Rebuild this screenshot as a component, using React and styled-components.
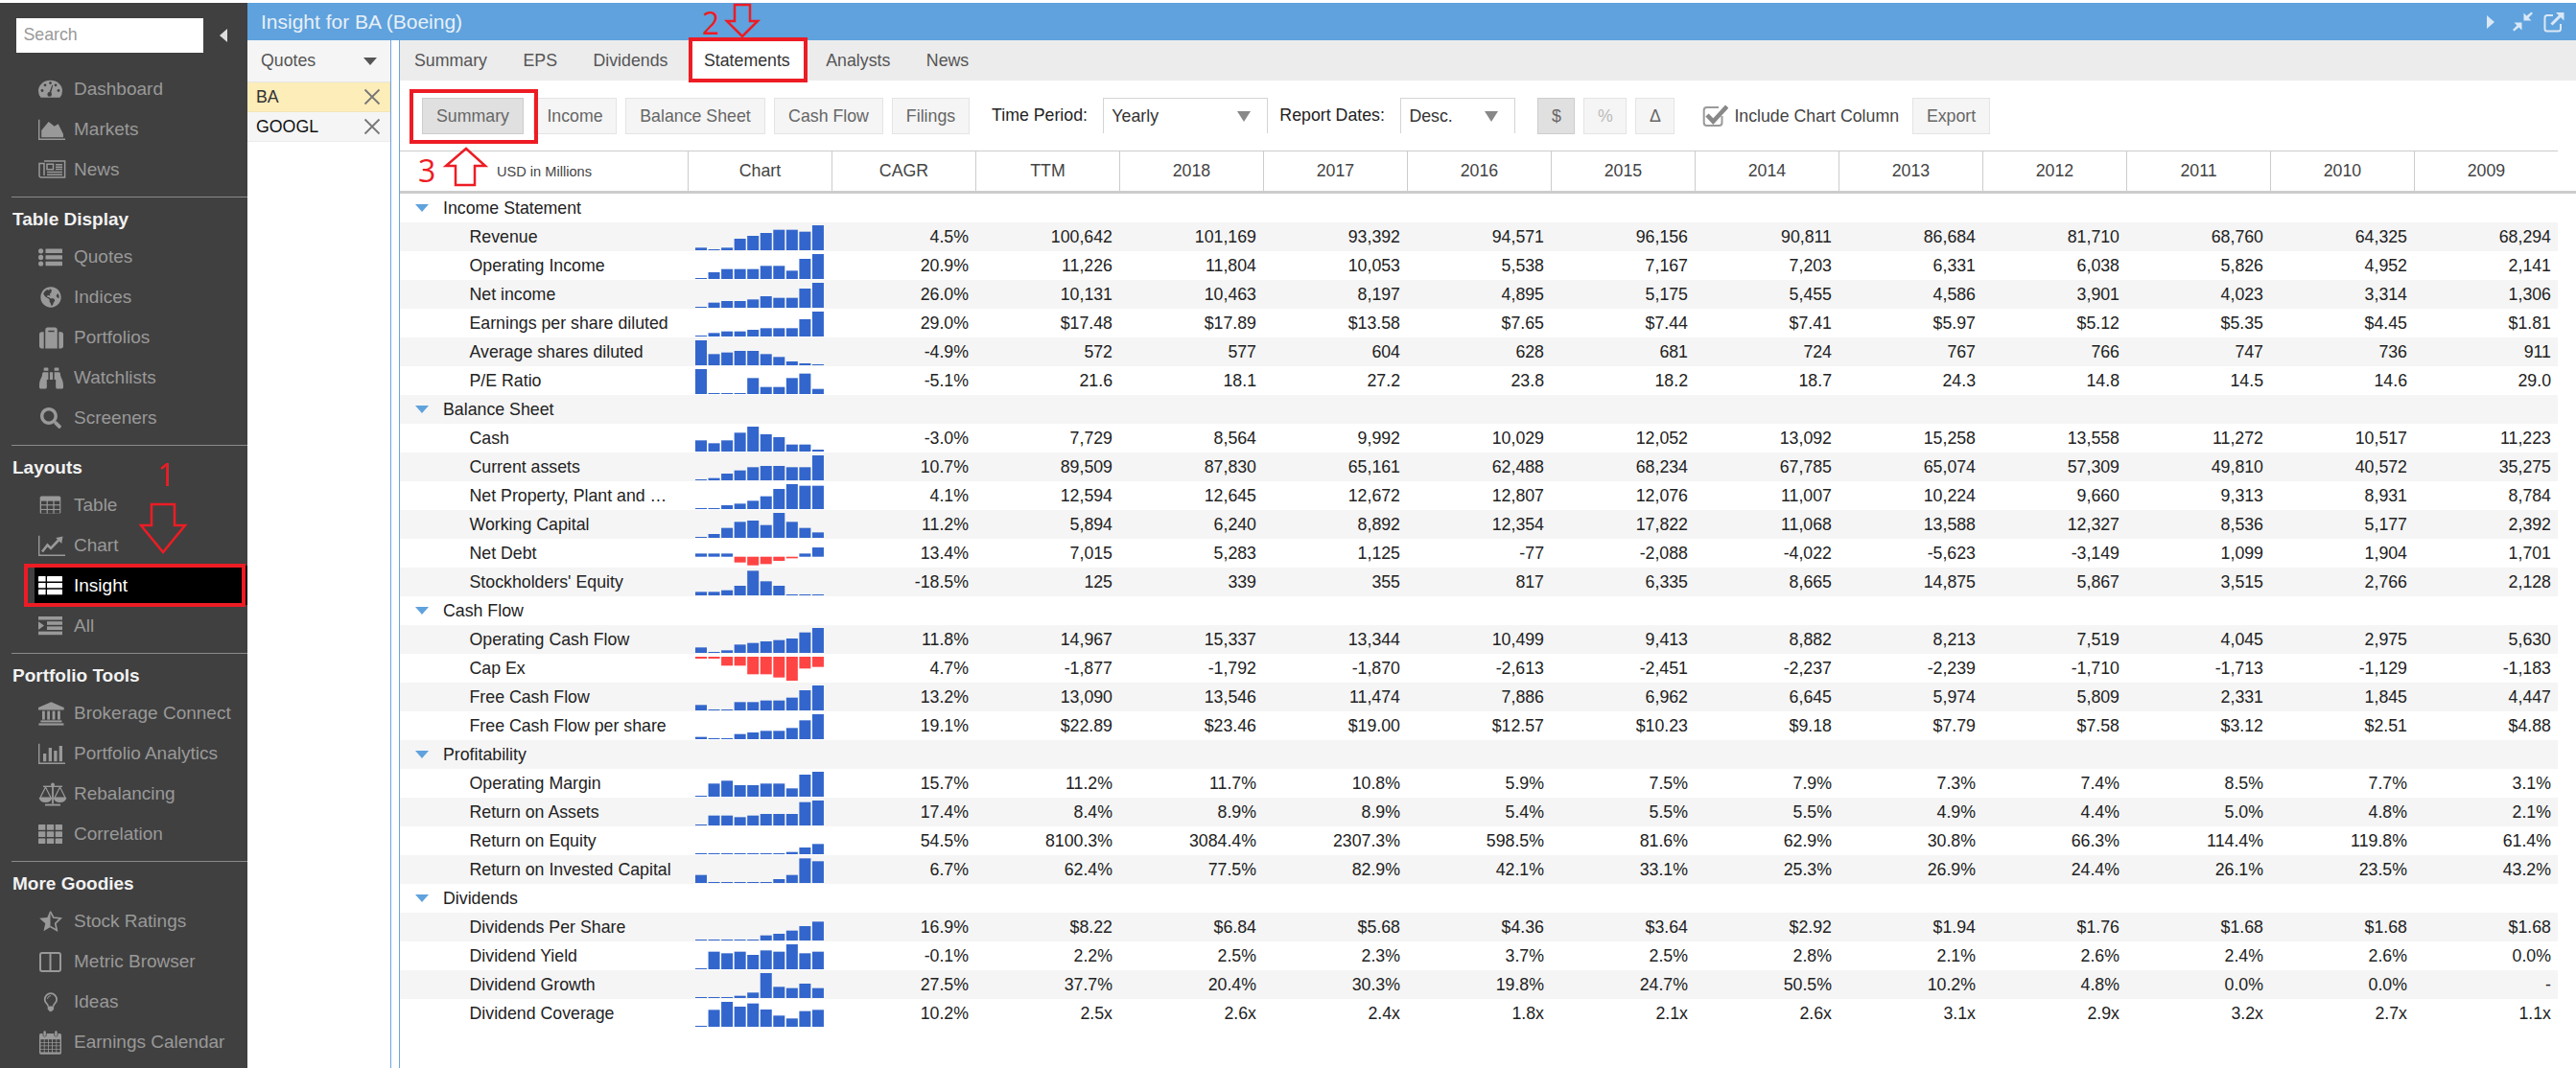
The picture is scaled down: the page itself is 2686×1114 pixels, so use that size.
import React from "react";
import styled, { createGlobalStyle } from "styled-components";
import { FaGlobeAmericas, FaSuitcase, FaBinoculars, FaSearch } from "react-icons/fa";

const Global = createGlobalStyle`
  html, body { margin: 0; padding: 0; background: #fff; overflow: hidden; }
  body { font-family: "Liberation Sans", Arial, sans-serif; font-size: 17.75px; color: #222; }
  * { box-sizing: border-box; }
`;

const Page = styled.div`
  position: relative;
  display: flex;
  width: 2686px;
  height: 1114px;
  padding-top: 3px;
  overflow: hidden;
`;

/* ---------- sidebar ---------- */
const Sidebar = styled.aside`
  flex: 0 0 258px;
  background: #404040;
  color: #999;
  font-size: 19px;
`;
const SearchRow = styled.div`
  display: flex;
  align-items: center;
  height: 69px;
  padding: 0 0 0 17px;
`;
const SearchInput = styled.input`
  width: 195px;
  height: 36px;
  margin-top: -2px;
  border: 0;
  padding: 0 7.5px;
  font: 17.75px "Liberation Sans", Arial, sans-serif;
  background: #fff;
  &::placeholder { color: #999; opacity: 1; }
`;
const CollapseArrow = styled.span`
  margin: -2px 0 0 17px;
  width: 0;
  height: 0;
  border-top: 7px solid transparent;
  border-bottom: 7px solid transparent;
  border-right: 8px solid #ddd;
`;
const NavSection = styled.section`
  margin-top: 7px;
  margin-left: 12px;
  border-top: 1px solid #8a8a8a;
`;
const NavHeading = styled.h3`
  margin: 0;
  height: 41px;
  line-height: 46px;
  margin-left: 1px;
  font-size: 19px;
  font-weight: 700;
  color: #f2f2f2;
`;
const NavItem = styled.div`
  display: flex;
  align-items: center;
  gap: 11px;
  height: ${(p) => (p.$active ? "41px" : "42px")};
  margin: ${(p) => (p.$active ? "0 0 1px" : "0")};
  margin-left: ${(p) => p.$inset}px;
  padding-left: 4px;
  background: ${(p) => (p.$active ? "#000" : "transparent")};
  color: ${(p) => (p.$active ? "#fff" : "#999")};
  white-space: nowrap;
`;
const NavIcon = styled.span`
  display: flex;
  align-items: center;
  justify-content: ${(p) => (p.$fa ? "center" : "flex-start")};
  flex: 0 0 26px;
  font-size: ${(p) => p.$fa ?? 24}px;
`;
const Glyph = styled.svg`
  flex: none;
  width: 30px;
  height: 26px;
  margin-right: -4px;
  fill: currentColor;
  stroke: none;
`;

/* ---------- main ---------- */
const Main = styled.main`
  flex: 1;
  display: flex;
  flex-direction: column;
  min-width: 0;
`;
const TitleBar = styled.header`
  display: flex;
  align-items: center;
  justify-content: space-between;
  height: 39px;
  padding: 0 12px 0 14px;
  background: #5fa2dd;
  color: #e8f0f8;
  font-size: 21px;
`;
const TitleTools = styled.div`
  display: flex;
  align-items: center;
  gap: 11px;
  color: #dbe8f5;
`;
const PlayArrow = styled.span`
  margin-right: 8px;
  width: 0;
  height: 0;
  border-top: 7px solid transparent;
  border-bottom: 7px solid transparent;
  border-left: 8px solid #dbe8f5;
`;
const Workspace = styled.div`
  flex: 1;
  display: flex;
  min-height: 0;
`;
const QuotesPanel = styled.div`
  flex: 0 0 150px;
  border-right: 1px solid #6ea5dc;
`;
const QuotesHead = styled.div`
  display: flex;
  align-items: center;
  justify-content: space-between;
  height: 44px;
  padding: 0 14px;
  background: #f5f5f5;
  color: #555;
  border-bottom: 1px solid #e6e6e6;
`;
const DownTriangle = styled.span`
  width: 0;
  height: 0;
  border-left: ${(p) => p.$w / 2}px solid transparent;
  border-right: ${(p) => p.$w / 2}px solid transparent;
  border-top: ${(p) => p.$h}px solid ${(p) => p.$c};
`;
const QuoteRow = styled.div`
  display: flex;
  align-items: center;
  justify-content: space-between;
  height: 31px;
  padding: 0 9px;
  background: ${(p) => (p.$selected ? "#fdedb9" : "#f5f5f5")};
  border: 1px solid ${(p) => (p.$selected ? "#f1e4b8" : "#ececec")};
  border-width: 0 1px 1px 0;
  color: ${(p) => (p.$selected ? "#333" : "#111")};
`;
const Gutter = styled.div`
  flex: 0 0 8px;
`;
const Content = styled.div`
  flex: 1;
  min-width: 0;
  border-left: 1px solid #6ea5dc;
`;
const Tabs = styled.nav`
  display: flex;
  gap: 7.5px;
  height: 42px;
  background: #ececec;
`;
const Tab = styled.div`
  display: flex;
  align-items: center;
  padding: 0 15px;
  background: ${(p) => (p.$active ? "#fff" : "transparent")};
  color: ${(p) => (p.$active ? "#333" : "#555")};
`;
const Toolbar = styled.div`
  display: flex;
  align-items: flex-start;
  height: 73px;
  padding: 18px 0 0 23px;
`;
const Btn = styled.button`
  flex: 0 0 ${(p) => p.$w}px;
  height: 38px;
  margin-left: ${(p) => p.$ml ?? 9}px;
  padding: 0;
  border: 1px solid ${(p) => (p.$on ? "#cdcdcd" : "#e4e4e4")};
  background: ${(p) => (p.$on ? "#e0e0e0" : "#f5f5f5")};
  color: ${(p) => p.$c ?? "#666"};
  font: 17.75px "Liberation Sans", Arial, sans-serif;
`;
const ToolLabel = styled.span`
  margin-left: ${(p) => p.$ml}px;
  line-height: 36px;
  color: #222;
  white-space: nowrap;
`;
const Select = styled.div`
  display: flex;
  align-items: center;
  justify-content: space-between;
  flex: 0 0 ${(p) => p.$w}px;
  height: 37px;
  margin-left: ${(p) => p.$ml}px;
  padding: 0 17px 0 8px;
  border: 1px solid #d4d4d4;
  border-bottom: 0;
  color: #333;
`;
const CheckLabel = styled.span`
  display: flex;
  align-items: center;
  gap: 6px;
  height: 38px;
  margin-left: 29px;
  color: #444;
  white-space: nowrap;
`;

/* ---------- table ---------- */
const HeadRow = styled.div`
  display: flex;
  height: 45px;
  border-bottom: 3px solid #ccc;
`;
const HeadTop = styled.div`
  display: flex;
  width: 2250px;
  height: 42px;
  border-top: 1px solid #ccc;
`;
const UnitCell = styled.div`
  flex: 0 0 300px;
  display: flex;
  align-items: center;
  padding-left: 101px;
  font-size: 14.6px;
  color: #444;
`;
const HeadCell = styled.div`
  flex: 0 0 150px;
  display: flex;
  align-items: center;
  justify-content: center;
  border-left: 1px solid #ccc;
  color: #444;
`;
const Row = styled.div`
  display: flex;
  width: 2250px;
  height: 30px;
  line-height: 30px;
  background: ${(p) => (p.$striped ? "#f5f5f5" : "#fff")};
  color: #222;
`;
const GroupLabel = styled.div`
  display: flex;
  align-items: center;
  gap: 15px;
  padding-left: 16px;
`;
const RowLabel = styled.div`
  flex: 0 0 300px;
  padding: 0 0 0 72.5px;
  white-space: nowrap;
`;
const ChartCell = styled.div`
  flex: 0 0 150px;
  display: flex;
  padding-left: 8px;
`;
const ValueCell = styled.div`
  flex: 0 0 150px;
  padding-right: 7px;
  text-align: right;
`;

/* ---------- annotations over the page ---------- */
const Overlay = styled.svg`
  position: absolute;
  left: 0;
  top: 0;
  width: 2686px;
  height: 1114px;
  pointer-events: none;
`;
const RedBox = styled.div`
  position: absolute;
  left: ${(p) => p.$x}px;
  top: ${(p) => p.$y}px;
  width: ${(p) => p.$w}px;
  height: ${(p) => p.$h}px;
  border: 4.5px solid #ed1c24;
  pointer-events: none;
`;
const RedMark = styled.span`
  position: absolute;
  left: ${(p) => p.$x}px;
  top: ${(p) => p.$y}px;
  font: 32px/32px "Open Sans", sans-serif;
  color: #ed1c24;
`;

/* ---------- sidebar glyphs, local box: x0 = 40px, 26px high, centred on the row ---------- */
const DARK = "#404040";
const Axis = () => <path d="M0 2.8 H1.4 V22.6 H28 V24 H0 Z" />;

const IconGauge = () => (
  <Glyph viewBox="0 0 30 26">
    <path d="M2.6 21.8 Q0 18.8 0 14.8 A12.5 11 0 0 1 25 14.8 Q25 18.8 22.4 21.8 Z" />
    <g fill={DARK}>
      <circle cx="4" cy="14.5" r="1.4" /><circle cx="7" cy="8.8" r="1.4" /><circle cx="12.5" cy="6.6" r="1.4" />
      <circle cx="18" cy="8.8" r="1.4" /><circle cx="21" cy="14.5" r="1.4" /><circle cx="11.7" cy="18.4" r="2.3" />
      <path d="M10.9 18 L14.3 8.8 L15.2 9.1 L12.7 18.7 Z" />
    </g>
  </Glyph>
);
const IconArea = () => (
  <Glyph viewBox="0 0 30 26">
    <Axis />
    <path d="M3.2 21.2 V14 L10.7 5 L16.7 9.7 L20.7 7.3 L26 18 V21.2 Z" />
  </Glyph>
);
const IconNews = () => (
  <Glyph viewBox="0 0 30 26">
    <g fill="none" stroke="currentColor" strokeWidth="1.5">
      <path d="M6 4.1 H27.6 V20.9 H2.6 Q1 20.9 1 19.3 V6.5 H6 V19" />
      <rect x="9" y="7.2" width="6.5" height="5.5" />
      <path d="M18 7.8 H25 M18 10.2 H25 M18 12.6 H25 M9 15.6 H25 M9 18.2 H25" />
    </g>
  </Glyph>
);
const IconList = () => (
  <Glyph viewBox="0 0 30 26">
    <circle cx="2.6" cy="6.8" r="2.6" /><circle cx="2.6" cy="13.4" r="2.6" /><circle cx="2.6" cy="20" r="2.6" />
    <rect x="7.5" y="4.6" width="17.5" height="4.4" rx="0.6" />
    <rect x="7.5" y="11.2" width="17.5" height="4.4" rx="0.6" />
    <rect x="7.5" y="17.8" width="17.5" height="4.4" rx="0.6" />
  </Glyph>
);
const IconTable = () => {
  const cells = [];
  for (let r = 0; r < 3; r++) for (let c = 0; c < 3; c++) {
    cells.push(<rect key={`${r}${c}`} x={3 + c * 6.8} y={8.6 + r * 4.7} width="5.6" height="3.6" />);
  }
  return (
    <Glyph viewBox="0 0 30 26">
      <rect x="1.7" y="3.6" width="21.6" height="18.2" rx="1.6" />
      <g fill={DARK}>{cells}</g>
    </Glyph>
  );
};
const IconLine = () => (
  <Glyph viewBox="0 0 30 26">
    <Axis />
    <path d="M4 19.5 L9.5 12.5 L13 16 L21 7.5" fill="none" stroke="currentColor" strokeWidth="2.6" />
    <path d="M18.2 5 L25.5 3.6 L24.2 11 Z" />
  </Glyph>
);
const IconThList = () => (
  <Glyph viewBox="0 0 30 26">
    {[3, 9.9, 16.8].map((y) => (
      <React.Fragment key={y}>
        <rect x="0" y={y} width="7.6" height="5.4" rx="0.5" />
        <rect x="9" y={y} width="16" height="5.4" rx="0.5" />
      </React.Fragment>
    ))}
  </Glyph>
);
const IconIndent = () => (
  <Glyph viewBox="0 0 30 26">
    <rect x="0" y="3" width="25" height="3.6" />
    <rect x="9" y="8.2" width="16" height="3.6" />
    <rect x="9" y="13.4" width="16" height="3.6" />
    <rect x="0" y="18.6" width="25" height="3.6" />
    <path d="M0 8.2 L6 12.6 L0 17 Z" />
  </Glyph>
);
const IconBank = () => (
  <Glyph viewBox="0 0 30 26">
    <path d="M13.3 1.3 L26.7 7 V9.4 H0 V7 Z" />
    <rect x="4" y="10.6" width="2.8" height="9" /><rect x="9.2" y="10.6" width="2.8" height="9" />
    <rect x="14.6" y="10.6" width="2.8" height="9" /><rect x="20" y="10.6" width="2.8" height="9" />
    <rect x="2.4" y="20.4" width="22" height="2" /><rect x="0.4" y="23.4" width="26" height="2.2" />
  </Glyph>
);
const IconBars = () => (
  <Glyph viewBox="0 0 30 26">
    <Axis />
    <rect x="5" y="13" width="3.3" height="8.2" /><rect x="10.7" y="7" width="3.3" height="14.2" />
    <rect x="16.2" y="10" width="3.3" height="11.2" /><rect x="21.7" y="5" width="3.3" height="16.2" />
  </Glyph>
);
const IconScale = () => (
  <Glyph viewBox="0 0 30 26">
    <rect x="14.1" y="3" width="1.8" height="20.5" />
    <rect x="7" y="23.6" width="16" height="1.9" />
    <path d="M5 4.6 H25 V6 H5 Z" />
    <circle cx="15" cy="3.5" r="1.9" />
    <g fill="none" stroke="currentColor" strokeWidth="1.2">
      <path d="M7.5 6 L2 17 H13 Z" /><path d="M22.5 6 L17 17 H28 Z" />
    </g>
    <path d="M0.6 17 H14.4 Q13.4 22 7.5 22 Q1.6 22 0.6 17 Z" />
    <path d="M15.6 17 H29.4 Q28.4 22 22.5 22 Q16.6 22 15.6 17 Z" />
  </Glyph>
);
const IconTh = () => (
  <Glyph viewBox="0 0 30 26">
    {[3, 10.2, 17.4].map((y) =>
      [0, 8.85, 17.7].map((x) => <rect key={`${x}${y}`} x={x} y={y} width="7.3" height="5.7" rx="0.5" />)
    )}
  </Glyph>
);
const IconStar = () => (
  <Glyph viewBox="0 0 30 26">
    <path d="M12.5 1.5 L9.27 9.05 L1.1 9.8 L7.27 15.2 L5.45 23.2 L12.5 19 Z" />
    <path d="M12.5 2.8 L15.73 9.05 L23.2 9.9 L17.73 15.2 L19.2 22.4 L12.5 18.6" fill="none" stroke="currentColor" strokeWidth="1.7" />
  </Glyph>
);
const IconColumns = () => (
  <Glyph viewBox="0 0 30 26">
    <g fill="none" stroke="currentColor" strokeWidth="2">
      <rect x="2" y="4" width="21" height="19" rx="2" />
      <path d="M12.5 4 V23" />
    </g>
  </Glyph>
);
const IconBulb = () => (
  <Glyph viewBox="0 0 30 26">
    <path
      d="M10 17.6 Q10 15.8 8.6 14.6 Q6.7 12.8 6.7 10.4 A6.2 6.2 0 0 1 19.1 10.4 Q19.1 12.8 17.2 14.6 Q15.8 15.8 15.8 17.6"
      fill="none" stroke="currentColor" strokeWidth="1.8"
    />
    <path d="M9.7 17.4 H16.1 V20.6 Q16.1 21.4 15 21.8 Q14 23.3 12.9 23.3 Q11.8 23.3 10.8 21.8 Q9.7 21.4 9.7 20.6 Z" />
    <path d="M9.5 10 A3.5 3.5 0 0 1 13 6.6" fill="none" stroke="currentColor" strokeWidth="1" />
  </Glyph>
);
const IconCalendar = () => {
  const cells = [];
  for (let r = 0; r < 4; r++) for (let c = 0; c < 5; c++) {
    cells.push(<rect key={`${r}${c}`} x={2.4 + c * 4.2} y={10.2 + r * 3.5} width="3.4" height="2.8" />);
  }
  return (
    <Glyph viewBox="0 0 30 26">
      <rect x="1" y="4" width="23" height="21.7" rx="1.6" />
      <g fill={DARK}>
        {cells}
        <rect x="4.6" y="1" width="4" height="6.6" rx="2" /><rect x="16.4" y="1" width="4" height="6.6" rx="2" />
      </g>
      <rect x="5.4" y="1.3" width="2.4" height="5.6" rx="1.2" /><rect x="17.2" y="1.3" width="2.4" height="5.6" rx="1.2" />
    </Glyph>
  );
};
const fa = (Icon, size) => ({ Icon, size });

/* ---------- data ---------- */
const nav = [
  { items: [["Dashboard", IconGauge], ["Markets", IconArea], ["News", IconNews]] },
  { title: "Table Display", items: [["Quotes", IconList], ["Indices", fa(FaGlobeAmericas, 22)], ["Portfolios", fa(FaSuitcase, 25)], ["Watchlists", fa(FaBinoculars, 25)], ["Screeners", fa(FaSearch, 22)]] },
  { title: "Layouts", items: [["Table", IconTable], ["Chart", IconLine], ["Insight", IconThList, true], ["All", IconIndent]] },
  { title: "Portfolio Tools", items: [["Brokerage Connect", IconBank], ["Portfolio Analytics", IconBars], ["Rebalancing", IconScale], ["Correlation", IconTh]] },
  { title: "More Goodies", items: [["Stock Ratings", IconStar], ["Metric Browser", IconColumns], ["Ideas", IconBulb], ["Earnings Calendar", IconCalendar]] },
];

const cols = ["CAGR", "TTM", "2018", "2017", "2016", "2015", "2014", "2013", "2012", "2011", "2010", "2009"];

const sections = [
  ["Income Statement", [
    ["Revenue", [8,3,8,36,45,54,64,64,58,78], "4.5% 100,642 101,169 93,392 94,571 96,156 90,811 86,684 81,710 68,760 64,325 68,294"],
    ["Operating Income", [3,21,31,31,31,41,41,26,63,78], "20.9% 11,226 11,804 10,053 5,538 7,167 7,203 6,331 6,038 5,826 4,952 2,141"],
    ["Net income", [3,16,21,21,26,36,31,31,60,78], "26.0% 10,131 10,463 8,197 4,895 5,175 5,455 4,586 3,901 4,023 3,314 1,306"],
    ["Earnings per share diluted", [3,11,16,16,21,26,26,26,54,78], "29.0% $17.48 $17.89 $13.58 $7.65 $7.44 $7.41 $5.97 $5.12 $5.35 $4.45 $1.81"],
    ["Average shares diluted", [78,35,40,45,45,35,26,12,6,3], "-4.9% 572 577 604 628 681 724 767 766 747 736 911"],
    ["P/E Ratio", [78,3,3,3,50,22,22,50,64,16], "-5.1% 21.6 18.1 27.2 23.8 18.2 18.7 24.3 14.8 14.5 14.6 29.0"],
  ]],
  ["Balance Sheet", [
    ["Cash", [35,26,35,59,78,54,45,22,22,6], "-3.0% 7,729 8,564 9,992 10,029 12,052 13,092 15,258 13,558 11,272 10,517 11,223"],
    ["Current assets", [3,7,21,31,41,45,45,41,41,78], "10.7% 89,509 87,830 65,161 62,488 68,234 67,785 65,074 57,309 49,810 40,572 35,275"],
    ["Net Property, Plant and …", [3,3,12,17,26,40,63,78,73,73], "4.1% 12,594 12,645 12,672 12,807 12,076 11,007 10,224 9,660 9,313 8,931 8,784"],
    ["Working Capital", [3,12,31,50,54,40,78,50,31,17], "11.2% 5,894 6,240 8,892 12,354 17,822 11,068 13,588 12,327 8,536 5,177 2,392"],
    ["Net Debt", [10,10,10,-18,-27,-23,-13,-5,10,29], "13.4% 7,015 5,283 1,125 -77 -2,088 -4,022 -5,623 -3,149 1,099 1,904 1,701", 18.7],
    ["Stockholders' Equity", [11,11,16,30,77,44,30,3,3,3], "-18.5% 125 339 355 817 6,335 8,665 14,875 5,867 3,515 2,766 2,128"],
  ]],
  ["Cash Flow", [
    ["Operating Cash Flow", [17,3,8,26,31,36,40,45,64,78], "11.8% 14,967 15,337 13,344 10,499 9,413 8,882 8,213 7,519 4,045 2,975 5,630"],
    ["Cap Ex", [-6,-6,-28,-28,-55,-55,-65,-75,-37,-32], "4.7% -1,877 -1,792 -1,870 -2,613 -2,451 -2,237 -2,239 -1,710 -1,713 -1,129 -1,183", 3],
    ["Free Cash Flow", [17,3,3,26,26,31,31,40,63,78], "13.2% 13,090 13,546 11,474 7,886 6,962 6,645 5,974 5,809 2,331 1,845 4,447"],
    ["Free Cash Flow per share", [7,3,3,16,21,26,26,35,59,78], "19.1% $22.89 $23.46 $19.00 $12.57 $10.23 $9.18 $7.79 $7.58 $3.12 $2.51 $4.88"],
  ]],
  ["Profitability", [
    ["Operating Margin", [3,41,50,36,36,41,41,26,69,78], "15.7% 11.2% 11.7% 10.8% 5.9% 7.5% 7.9% 7.3% 7.4% 8.5% 7.7% 3.1%"],
    ["Return on Assets", [3,31,31,26,31,36,36,36,73,78], "17.4% 8.4% 8.9% 8.9% 5.4% 5.5% 5.5% 4.9% 4.4% 5.0% 4.8% 2.1%"],
    ["Return on Equity", [3,3,3,3,3,3,3,7,21,32], "54.5% 8100.3% 3084.4% 2307.3% 598.5% 81.6% 62.9% 30.8% 66.3% 114.4% 119.8% 61.4%"],
    ["Return on Invested Capital", [25,3,3,3,3,3,12,25,77,68], "6.7% 62.4% 77.5% 82.9% 42.1% 33.1% 25.3% 26.9% 24.4% 26.1% 23.5% 43.2%"],
  ]],
  ["Dividends", [
    ["Dividends Per Share", [3,3,3,3,3,16,21,31,45,59], "16.9% $8.22 $6.84 $5.68 $4.36 $3.64 $2.92 $1.94 $1.76 $1.68 $1.68 $1.68"],
    ["Dividend Yield", [3,55,50,55,45,59,55,78,50,55], "-0.1% 2.2% 2.5% 2.3% 3.7% 2.5% 2.8% 2.1% 2.6% 2.4% 2.6% 0.0%"],
    ["Dividend Growth", [3,3,3,7,17,78,35,31,45,31], "27.5% 37.7% 20.4% 30.3% 19.8% 24.7% 50.5% 10.2% 4.8% 0.0% 0.0% -"],
    ["Dividend Coverage", [3,53,78,63,73,54,35,26,49,53], "10.2% 2.5x 2.6x 2.4x 1.8x 2.1x 2.6x 3.1x 2.9x 3.2x 2.7x 1.1x"],
  ]],
];

function Spark({ bars, base = 29 }) {
  return (
    <svg width="136" height="30" viewBox="0 0 136 30">
      {bars.map((v, i) => {
        const h = Math.abs(v) / 3;
        const x = i * 13.55;
        return (
          <rect
            key={i}
            x={x}
            y={v >= 0 ? base - h : base}
            width="12"
            height={h}
            fill={v >= 0 ? "#3366cc" : "#ff4444"}
          />
        );
      })}
    </svg>
  );
}

const Cross = () => (
  <svg width="18" height="18" viewBox="0 0 18 18">
    <path d="M1.5 1.5 L16.5 16.5 M16.5 1.5 L1.5 16.5" stroke="#777" strokeWidth="1.8" fill="none" />
  </svg>
);

const CompressIcon = () => (
  <svg width="21" height="21" viewBox="0 0 21 21" fill="#dbe8f5">
    <path d="M19.5 0.5 L21 2 L16.5 6.5 L19.5 9.5 L11.5 9.5 L11.5 1.5 L14.5 4.5 Z" />
    <path d="M1.5 20.5 L0 19 L4.5 14.5 L1.5 11.5 L9.5 11.5 L9.5 19.5 L6.5 16.5 Z" />
  </svg>
);

const ExternalIcon = () => (
  <svg width="22" height="22" viewBox="0 0 22 22" fill="none" stroke="#dbe8f5" strokeWidth="2">
    <path d="M10 4 H4 Q1.5 4 1.5 6.5 V18 Q1.5 20.5 4 20.5 H15.5 Q18 20.5 18 18 V13" />
    <path d="M8.5 13.5 L18.5 3.5" strokeWidth="3" />
    <path d="M13 1 H21.5 V9.5 Z" fill="#dbe8f5" stroke="none" />
  </svg>
);

const CheckIcon = () => (
  <svg width="27" height="27" viewBox="0 0 27 27" fill="none">
    <path d="M20.5 13 V20 Q20.5 23 17.5 23 H4.7 Q1.7 23 1.7 20 V7 Q1.7 4 4.7 4 H17" stroke="#9a9a9a" strokeWidth="2" />
    <path d="M5 12 L11.3 18.7 L25.7 3" stroke="#888" strokeWidth="4.6" />
  </svg>
);

const renderIcon = (entry) => {
  if (entry.Icon) {
    const Icon = entry.Icon;
    return <NavIcon $fa={entry.size}><Icon /></NavIcon>;
  }
  const Icon = entry;
  return <NavIcon><Icon /></NavIcon>;
};

export default function App() {
  let counter = 0;
  return (
    <Page>
      <Global />
      <Sidebar>
        <SearchRow>
          <SearchInput placeholder="Search" />
          <CollapseArrow />
        </SearchRow>
        {nav.map((s, si) =>
          s.title ? (
            <NavSection key={si}>
              <NavHeading>{s.title}</NavHeading>
              {s.items.map(([label, icon, active]) => (
                <NavItem key={label} $active={active} $inset={24}>
                  {renderIcon(icon)}
                  {label}
                </NavItem>
              ))}
            </NavSection>
          ) : (
            s.items.map(([label, icon]) => (
              <NavItem key={label} $inset={36}>
                {renderIcon(icon)}
                {label}
              </NavItem>
            ))
          )
        )}
      </Sidebar>
      <Main>
        <TitleBar>
          Insight for BA (Boeing)
          <TitleTools>
            <PlayArrow />
            <CompressIcon />
            <ExternalIcon />
          </TitleTools>
        </TitleBar>
        <Workspace>
          <QuotesPanel>
            <QuotesHead>
              Quotes
              <DownTriangle $w={14} $h={8} $c="#555" />
            </QuotesHead>
            <QuoteRow $selected>BA<Cross /></QuoteRow>
            <QuoteRow>GOOGL<Cross /></QuoteRow>
          </QuotesPanel>
          <Gutter />
          <Content>
            <Tabs>
              {["Summary", "EPS", "Dividends", "Statements", "Analysts", "News"].map((t) => (
                <Tab key={t} $active={t === "Statements"}>{t}</Tab>
              ))}
            </Tabs>
            <Toolbar>
              <Btn $on $ml={0} $w={106}>Summary</Btn>
              <Btn $ml={10} $w={87}>Income</Btn>
              <Btn $w={146}>Balance Sheet</Btn>
              <Btn $w={114}>Cash Flow</Btn>
              <Btn $w={81}>Filings</Btn>
              <ToolLabel $ml={23}>Time Period:</ToolLabel>
              <Select $w={172} $ml={16.4}>Yearly<DownTriangle $w={14} $h={11} $c="#888" /></Select>
              <ToolLabel $ml={12}>Report Dates:</ToolLabel>
              <Select $w={120} $ml={16.5}>Desc.<DownTriangle $w={14} $h={11} $c="#888" /></Select>
              <Btn $on $ml={23} $w={39}>$</Btn>
              <Btn $w={45} $c="#bbb">%</Btn>
              <Btn $w={41}>Δ</Btn>
              <CheckLabel><CheckIcon />Include Chart Column</CheckLabel>
              <Btn $ml={14} $w={81}>Export</Btn>
            </Toolbar>
            <HeadRow>
              <HeadTop>
                <UnitCell>USD in Millions</UnitCell>
                <HeadCell>Chart</HeadCell>
                {cols.map((c) => <HeadCell key={c}>{c}</HeadCell>)}
              </HeadTop>
            </HeadRow>
            {sections.map(([title, rows]) => (
              <React.Fragment key={title}>
                <Row $striped={counter++ % 2 === 1}>
                  <GroupLabel>
                    <DownTriangle $w={14} $h={8} $c="#5fa2dd" />
                    {title}
                  </GroupLabel>
                </Row>
                {rows.map(([label, bars, values, base]) => (
                  <Row key={label} $striped={counter++ % 2 === 1}>
                    <RowLabel>{label}</RowLabel>
                    <ChartCell><Spark bars={bars} base={base} /></ChartCell>
                    {values.split(" ").map((v, i) => <ValueCell key={i}>{v}</ValueCell>)}
                  </Row>
                ))}
              </React.Fragment>
            ))}
          </Content>
        </Workspace>
      </Main>

      <RedBox $x={25} $y={588} $w={231} $h={45} />
      <RedBox $x={718} $y={39} $w={124} $h={47} />
      <RedBox $x={427} $y={93} $w={134} $h={57} />
      <RedMark $x={164} $y={479}>1</RedMark>
      <RedMark $x={732} $y={8}>2</RedMark>
      <RedMark $x={436} $y={162}>3</RedMark>
      <Overlay viewBox="0 0 2686 1114" fill="none" stroke="#ed1c24" strokeWidth="2.5">
        <path d="M158 526 H182 V548 H193 L170 576 L147 548 H158 Z" />
        <path d="M766 5 H782 V22 H790 L774 38 L758 22 H766 Z" />
        <path d="M486 155 L506 173 H495 V193 H475 V173 H465 Z" />
      </Overlay>
    </Page>
  );
}
